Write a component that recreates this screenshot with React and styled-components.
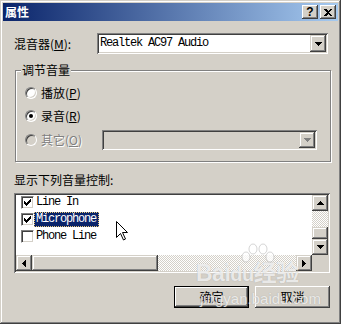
import React from "react";
import styled, { createGlobalStyle, css } from "styled-components";

const face = "#d4d0c8";

const GlobalStyle = createGlobalStyle`
  html, body {
    margin: 0;
    padding: 0;
    background: ${face};
  }
  body {
    font-family: "Noto Sans CJK SC", "DejaVu Sans", sans-serif;
    font-size: 12px;
    color: #000;
  }
`;

const raised = css`
  background: ${face};
  box-shadow: inset -1px -1px #404040, inset 1px 1px ${face},
    inset -2px -2px #808080, inset 2px 2px #fff;
`;

const sunken = css`
  box-shadow: inset 1px 1px #808080, inset -1px -1px #fff,
    inset 2px 2px #404040, inset -2px -2px ${face};
`;

const Window = styled.div`
  position: relative;
  width: 341px;
  height: 324px;
  box-sizing: border-box;
  padding: 3px;
  background: ${face};
  box-shadow: inset -1px -1px #404040, inset 1px 1px ${face},
    inset -2px -2px #808080, inset 2px 2px #fff;
  display: flex;
  flex-direction: column;
  overflow: hidden;
`;

const TitleBar = styled.div`
  height: 18px;
  display: flex;
  align-items: center;
  padding: 0 2px;
  background: linear-gradient(to right, #0a246a, #a6caf0);
`;

const Title = styled.div`
  flex: 1;
  color: #fff;
  font-weight: bold;
  font-size: 12px;
  line-height: 18px;
`;

const CaptionButtons = styled.div`
  display: flex;
  gap: 2px;
`;

const CaptionButton = styled.div`
  ${raised};
  box-shadow: inset -1px -1px #404040, inset 1px 1px #fff,
    inset -2px -2px #808080, inset 2px 2px ${face};
  width: 16px;
  height: 14px;
  display: flex;
  align-items: center;
  justify-content: center;
  font-family: "Liberation Sans", sans-serif;
  font-weight: bold;
  font-size: 12px;
  line-height: 14px;
`;

const Content = styled.div`
  flex: 1;
  display: flex;
  flex-direction: column;
  padding: 0 8px 0 11px;
`;

const MixerRow = styled.div`
  margin-top: 12px;
  height: 21px;
  display: flex;
  align-items: center;
`;

const FieldLabel = styled.div`
  width: 83px;
  line-height: 14px;
  u {
    text-decoration: underline;
  }
`;

const Combo = styled.div`
  ${sunken};
  width: ${(p) => p.$w}px;
  height: ${(p) => p.$h}px;
  box-sizing: border-box;
  padding: 2px;
  display: flex;
  align-items: stretch;
  background: ${(p) => (p.$disabled ? face : "#fff")};
`;

const ComboText = styled.div`
  flex: 1;
  padding-left: 1px;
  font-family: "Liberation Mono", monospace;
  font-size: 12px;
  letter-spacing: -1.2px;
  line-height: 17px;
  white-space: nowrap;
`;

const ArrowButton = styled.div`
  box-shadow: inset -1px -1px #404040, inset 1px 1px ${face},
    inset -2px -2px #808080, inset 2px 2px #fff;
  background: ${face};
  width: ${(p) => p.$w || 16}px;
  height: ${(p) => p.$h || 16}px;
  flex: none;
  display: flex;
  align-items: center;
  justify-content: center;
`;

const GroupBox = styled.div`
  position: relative;
  margin-top: 16px;
  margin-left: 1px;
  width: 316px;
  height: 92px;
  box-sizing: border-box;
  border: 1px solid #808080;
  box-shadow: inset 1px 1px #fff, 1px 1px #fff;
  padding: 13px 0 0 9px;
  display: flex;
  flex-direction: column;
  gap: 6px;
`;

const Legend = styled.div`
  position: absolute;
  top: -8px;
  left: 5px;
  padding: 0 1px;
  background: ${face};
  line-height: 14px;
`;

const RadioRow = styled.div`
  height: ${(p) => p.$h || 17}px;
  display: flex;
  align-items: center;
  gap: 4px;
`;

const RadioCircle = styled.div`
  width: 12px;
  height: 12px;
  box-sizing: border-box;
  border-radius: 50%;
  border: 1px solid;
  border-color: #808080 #fff #fff #808080;
  box-shadow: inset 1px 1px #404040, inset -1px -1px ${face};
  background: ${(p) => (p.$disabled ? face : "#fff")};
  display: flex;
  align-items: center;
  justify-content: center;
  &::after {
    content: "";
    display: ${(p) => (p.$checked ? "block" : "none")};
    width: 4px;
    height: 4px;
    border-radius: 50%;
    background: #000;
  }
`;

const RadioText = styled.div`
  line-height: 14px;
  width: ${(p) => (p.$w ? `${p.$w}px` : "auto")};
  color: ${(p) => (p.$disabled ? "#808080" : "#000")};
  text-shadow: ${(p) => (p.$disabled ? "1px 1px #fff" : "none")};
  white-space: nowrap;
  u {
    text-decoration: underline;
  }
`;

const SectionLabel = styled.div`
  margin-top: 11px;
  line-height: 14px;
`;

const ListBox = styled.div`
  ${sunken};
  margin-top: 6px;
  width: 316px;
  height: 80px;
  box-sizing: border-box;
  padding: 2px;
  background: #fff;
  display: grid;
  grid-template-columns: 1fr 16px;
  grid-template-rows: 1fr 16px;
`;

const ListItems = styled.div`
  overflow: hidden;
  padding-left: 5px;
`;

const Item = styled.div`
  height: 17px;
  display: flex;
  align-items: flex-start;
`;

const CheckBox = styled.div`
  margin-top: 1px;
  width: 13px;
  height: 13px;
  box-sizing: border-box;
  border: 1px solid;
  border-color: #808080 #fff #fff #808080;
  box-shadow: inset 1px 1px #404040, inset -1px -1px ${face};
  background: #fff;
  display: flex;
  align-items: center;
  justify-content: center;
`;

const ItemText = styled.div`
  height: 15px;
  box-sizing: border-box;
  padding: 0 2px 0 1px;
  border: 1px dotted ${(p) => (p.$selected ? "#e8c878" : "transparent")};
  background: ${(p) => (p.$selected ? "#0a246a" : "transparent")};
  color: ${(p) => (p.$selected ? "#fff" : "#000")};
  font-family: "Liberation Mono", monospace;
  font-size: 12px;
  letter-spacing: -1.2px;
  line-height: 13px;
  white-space: nowrap;
`;

const VScroll = styled.div`
  display: flex;
  flex-direction: column;
`;

const HScroll = styled.div`
  display: flex;
`;

const Track = styled.div`
  flex: ${(p) => (p.$size ? "none" : 1)};
  ${(p) => (p.$vertical ? "height" : "width")}: ${(p) => (p.$size ? `${p.$size}px` : "auto")};
  background: repeating-conic-gradient(${face} 0 25%, #fff 0 50%) 0 0 / 2px 2px;
`;

const Thumb = styled.div`
  flex: none;
  ${(p) => (p.$vertical ? "height" : "width")}: ${(p) => p.$size}px;
  box-shadow: inset -1px -1px #404040, inset 1px 1px ${face},
    inset -2px -2px #808080, inset 2px 2px #fff;
  background: ${face};
`;

const Corner = styled.div`
  background: ${face};
`;

const ButtonRow = styled.div`
  margin-top: 13px;
  display: flex;
  justify-content: flex-end;
  gap: 6px;
`;

const Button = styled.div`
  width: 75px;
  height: 22px;
  box-sizing: border-box;
  display: flex;
  align-items: center;
  justify-content: center;
  background: ${face};
  border: ${(p) => (p.$default ? "1px solid #000" : "none")};
  box-shadow: inset -1px -1px #404040, inset 1px 1px #fff,
    inset -2px -2px #808080, inset 2px 2px ${face};
  line-height: 14px;
`;

const Cursor = styled.svg`
  position: absolute;
  left: 116px;
  top: 221px;
`;

const Watermark = styled.div`
  position: absolute;
  left: 196px;
  top: 243px;
  width: 120px;
  color: rgba(255, 255, 255, 0.75);
  text-shadow: 0 0 1px rgba(120, 120, 120, 0.5);
  font-family: "Liberation Sans", "Noto Sans CJK SC", sans-serif;
  pointer-events: none;
`;

const Logo = styled.div`
  margin-top: 18px;
  display: flex;
  align-items: baseline;
  font-size: 23px;
  font-weight: bold;
  line-height: 24px;
  letter-spacing: -0.5px;
  span {
    font-size: 20px;
  }
`;

const Site = styled.div`
  margin-top: 5px;
  margin-left: 4px;
  font-size: 15px;
  line-height: 16px;
`;

const Paw = styled.svg`
  position: absolute;
  left: 42px;
  top: 0;
`;

const Arrow = ({ dir, color = "#000" }) => {
  const shapes = {
    down: ["7", "4", "0,0 7,0 4,4 3,4"],
    up: ["7", "4", "3,0 4,0 7,4 0,4"],
    left: ["4", "7", "4,0 4,7 0,4 0,3"],
    right: ["4", "7", "0,0 4,3 4,4 0,7"],
  };
  const [w, h, pts] = shapes[dir];
  return (
    <svg width={w} height={h} shapeRendering="crispEdges">
      <polygon points={pts} fill={color} />
    </svg>
  );
};

const Check = () => (
  <svg width="7" height="7" shapeRendering="crispEdges">
    <path d="M0 2 L2 4 L6 0 L7 0 L7 3 L2 7 L0 5 Z" fill="#000" />
  </svg>
);

const items = [
  { name: "Line In", checked: true },
  { name: "Microphone", checked: true, selected: true },
  { name: "Phone Line", checked: false },
];

export default function App() {
  return (
    <>
      <GlobalStyle />
      <Window>
        <TitleBar>
          <Title>属性</Title>
          <CaptionButtons>
            <CaptionButton>?</CaptionButton>
            <CaptionButton>
              <svg width="8" height="7" shapeRendering="crispEdges">
                <path d="M0 0 L2 0 L4 2 L6 0 L8 0 L5 3.5 L8 7 L6 7 L4 5 L2 7 L0 7 L3 3.5 Z" fill="#000" />
              </svg>
            </CaptionButton>
          </CaptionButtons>
        </TitleBar>
        <Content>
          <MixerRow>
            <FieldLabel>
              混音器(<u>M</u>):
            </FieldLabel>
            <Combo $w={231} $h={21}>
              <ComboText>Realtek AC97 Audio</ComboText>
              <ArrowButton $h={17}>
                <Arrow dir="down" />
              </ArrowButton>
            </Combo>
          </MixerRow>

          <GroupBox>
            <Legend>调节音量</Legend>
            <RadioRow>
              <RadioCircle />
              <RadioText>
                播放(<u>P</u>)
              </RadioText>
            </RadioRow>
            <RadioRow>
              <RadioCircle $checked />
              <RadioText>
                录音(<u>R</u>)
              </RadioText>
            </RadioRow>
            <RadioRow $h={20}>
              <RadioCircle $disabled />
              <RadioText $disabled $w={57}>
                其它(<u>O</u>)
              </RadioText>
              <Combo $w={215} $h={20} $disabled>
                <ComboText />
                <ArrowButton $h={16}>
                  <Arrow dir="down" color="#808080" />
                </ArrowButton>
              </Combo>
            </RadioRow>
          </GroupBox>

          <SectionLabel>显示下列音量控制:</SectionLabel>
          <ListBox>
            <ListItems>
              {items.map((it) => (
                <Item key={it.name}>
                  <CheckBox>{it.checked && <Check />}</CheckBox>
                  <ItemText $selected={it.selected}>{it.name}</ItemText>
                </Item>
              ))}
            </ListItems>
            <VScroll>
              <ArrowButton>
                <Arrow dir="up" />
              </ArrowButton>
              <Track $vertical $size={16} />
              <Thumb $vertical $size={12} />
              <ArrowButton>
                <Arrow dir="down" />
              </ArrowButton>
            </VScroll>
            <HScroll>
              <ArrowButton>
                <Arrow dir="left" />
              </ArrowButton>
              <Thumb $size={126} />
              <Track />
              <ArrowButton>
                <Arrow dir="right" />
              </ArrowButton>
            </HScroll>
            <Corner />
          </ListBox>

          <ButtonRow>
            <Button $default>确定</Button>
            <Button>取消</Button>
          </ButtonRow>
        </Content>

        <Watermark>
          <Paw width="40" height="24" viewBox="0 0 40 24">
            <g fill="rgba(255,255,255,0.75)" stroke="rgba(150,150,150,0.5)" strokeWidth="0.8">
              <ellipse cx="8" cy="14" rx="4" ry="5" />
              <ellipse cx="15" cy="6" rx="4" ry="5" />
              <ellipse cx="25" cy="6" rx="4" ry="5" />
              <ellipse cx="32" cy="14" rx="4" ry="5" />
            </g>
          </Paw>
          <Logo>
            Bai<span>du</span>经验
          </Logo>
          <Site>jingyan.baidu.com</Site>
        </Watermark>

        <Cursor width="12" height="20" viewBox="0 0 12 20">
          <path
            d="M0.5 0.5 L0.5 16.5 L4.5 12.5 L7.5 19 L9.5 18 L6.5 11.5 L11.5 11.5 Z"
            fill="#fff"
            stroke="#000"
            strokeWidth="1"
          />
        </Cursor>
      </Window>
    </>
  );
}
